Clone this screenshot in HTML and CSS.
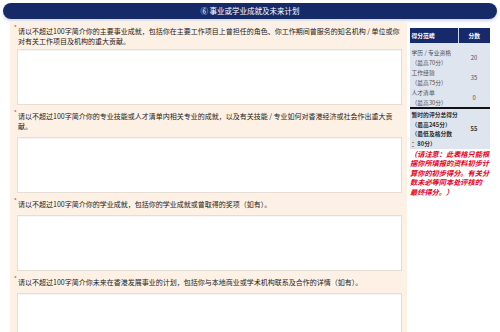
FILE: index.html
```html
<!DOCTYPE html>
<html lang="zh">
<head>
<meta charset="utf-8">
<link rel="stylesheet" href="styles.css">
</head>
<body>
<div class="page">
  <div class="hdr">⑥ 事业或学业成就及未来计划</div>
  <div class="main">
    <div class="panel">
      <div class="q first">
        <div class="label"><span class="req">*</span>请以不超过100字简介你的主要事业成就，包括你在主要工作项目上曾担任的角色、你工作期间曾服务的知名机构 / 单位或你<br>对有关工作项目及机构的重大贡献。</div>
        <div class="box"></div>
      </div>
      <div class="q">
        <div class="label"><span class="req">*</span>请以不超过100字简介你的专业技能或人才清单内相关专业的成就，以及有关技能 / 专业如何对香港经济或社会作出重大贡<br>献。</div>
        <div class="box"></div>
      </div>
      <div class="q">
        <div class="label"><span class="req">*</span>请以不超过100字简介你的学业成就，包括你的学业成就或曾取得的奖项（如有）。</div>
        <div class="box"></div>
      </div>
      <div class="q">
        <div class="label"><span class="req">*</span>请以不超过100字简介你未来在香港发展事业的计划，包括你与本地商业或学术机构联系及合作的详情（如有）。</div>
        <div class="box"></div>
      </div>
    </div>
    <div class="side">
      <table class="score">
        <thead>
          <tr><th class="c1">得分范畴</th><th class="c2">分数</th></tr>
        </thead>
        <tbody>
          <tr class="r1"><td class="c1">学历 / 专业资格<br>（最高70分）</td><td class="c2">20</td></tr>
          <tr><td class="c1">工作经验<br>（最高75分）</td><td class="c2">35</td></tr>
          <tr class="r3"><td class="c1">人才清单<br>（最高30分）</td><td class="c2">0</td></tr>
          <tr class="tot"><td class="c1">暂时的评分总得分<br>（最高245分）<br>（最低及格分数<br>：80分）</td><td class="c2">55</td></tr>
        </tbody>
      </table>
      <p class="note">（请注意：此表格只能根<br>据你所填报的资料初步计<br>算你的初步得分。有关分<br>数未必等同本处评核的<br>最终得分。）</p>
    </div>
  </div>
</div>
</body>
</html>
```
FILE: styles.css
```css
html, body {
  margin: 0;
  padding: 0;
  background: #ffffff;
}
body {
  width: 500px;
  height: 332px;
  overflow: hidden;
  font-family: "Noto Sans CJK SC", "Noto Sans", sans-serif;
  color: #222222;
}
.page {
  padding: 3px 3px 0;
}
.hdr {
  height: 16px;
  line-height: 16px;
  border-radius: 8px;
  background: #172a68;
  color: #ffffff;
  font-size: 7.5px;
  text-align: center;
  box-shadow: 0 2px 3px rgba(60, 90, 160, 0.25);
}
.main {
  display: flex;
  align-items: flex-start;
  gap: 3px;
  margin-top: 3px;
  padding-left: 7px;
}
.panel {
  width: 397px;
  box-sizing: border-box;
  background: #fdf1e6;
  padding: 0 5px 0 7px;
  height: 310px;
  overflow: hidden;
}
.label {
  font-size: 7px;
  line-height: 10px;
  padding: 6px 0 6px 1px;
  white-space: nowrap;
  position: relative;
}
.first .label {
  padding-top: 4px;
  padding-bottom: 3px;
}
.req {
  color: #e03a3a;
  position: absolute;
  left: -3px;
  top: 5px;
  font-size: 6px;
  line-height: 6px;
}
.first .req {
  top: 3px;
}
.box {
  height: 54px;
  background: #ffffff;
  border: 1px solid #e6ddd4;
  box-shadow: inset 0 1px 1px rgba(0, 0, 0, 0.04);
}
.side {
  width: 82px;
  padding-top: 6px;
}
.score {
  width: 80px;
  border-collapse: collapse;
  table-layout: fixed;
  font-size: 5.8px;
  line-height: 9.5px;
}
.score th {
  background: #15296b;
  color: #ffffff;
  font-weight: bold;
  height: 15px;
  padding: 0;
}
.score th.c1 {
  text-align: left;
  padding-left: 1.5px;
}
.score th.c2 {
  border-left: 1px solid #cfd6e6;
  text-align: center;
}
.c1 {
  width: 48px;
  box-sizing: border-box;
}
.score td {
  background: #dfe5ef;
  color: #4f4f4f;
  padding: 1px 0 0;
  white-space: nowrap;
  vertical-align: middle;
}
.score td.c1 {
  padding-left: 1.5px;
  text-align: left;
}
.score td.c2 {
  text-align: center;
}
.score .r1 td {
  padding-top: 5px;
}
.score .r3 td {
  border-bottom: 2px solid #111111;
}
.score .tot td {
  color: #2e2e2e;
  font-weight: bold;
  padding-bottom: 1px;
}
.note {
  margin: 1px 0 0;
  color: #e3001b;
  font-size: 7.2px;
  line-height: 9.4px;
  font-style: italic;
  font-weight: bold;
  white-space: nowrap;
}
```
